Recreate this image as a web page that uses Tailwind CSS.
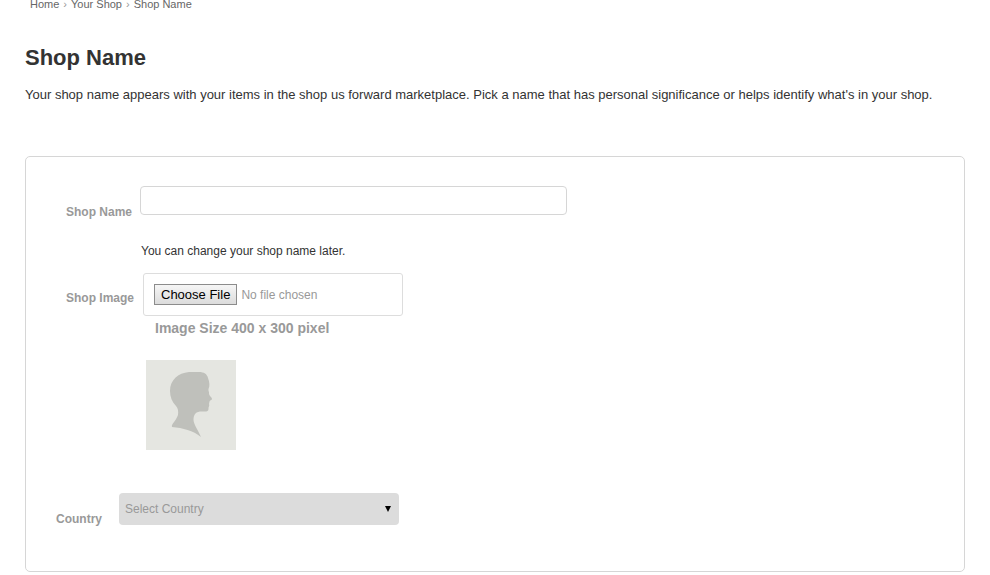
<!DOCTYPE html>
<html lang="en">
<head>
    <meta charset="UTF-8">
    <meta name="viewport" content="width=device-width, initial-scale=1.0">
    <title>Shop Name</title>
    <script src="https://cdn.jsdelivr.net/npm/@tailwindcss/browser@4"></script>
</head>
<body class="bg-white font-['Liberation_Sans',Arial,sans-serif] text-[13px] text-[#333]">
<div class="px-[25px]">
    <!-- Breadcrumbs -->
    <nav aria-label="Breadcrumb" class="flex gap-1 pl-[5px] text-[11px] leading-2 text-[#666]">
        <a href="#">Home</a>
        <span class="text-[#999]">›</span>
        <a href="#">Your Shop</a>
        <span class="text-[#999]">›</span>
        <a href="#">Shop Name</a>
    </nav>

    <!-- Heading -->
    <header>
        <h1 class="mt-9 text-[22px] leading-7 font-bold">Shop Name</h1>
        <p class="mt-[13px] leading-5">Your shop name appears with your items in the shop us forward marketplace. Pick a name that has personal significance or helps identify what's in your shop.</p>
    </header>

    <!-- Shop form -->
    <form class="mt-[51px] rounded-[5px] border border-[#d6d6d6] pt-[29px] pb-11">
        <div class="flex items-start pl-10">
            <label for="shopName" class="mt-[18px] w-[74px] text-xs leading-4 font-bold text-[#999]">Shop Name</label>
            <div class="flex-1">
                <input type="text" id="shopName" class="block h-[29px] w-full max-w-[427px] rounded-[4px] border border-[#d6d6d6] px-2">
                <p class="mt-[26px] pl-px text-xs leading-5">You can change your shop name later.</p>
            </div>
        </div>

        <div class="mt-3 flex items-start pl-10">
            <label for="shopImage" class="mt-[17px] w-[77px] text-xs leading-4 font-bold text-[#999]">Shop Image</label>
            <div>
                <input type="file" id="shopImage" class="block w-[260px] rounded-[3px] border border-[#ddd] p-[10px] text-xs text-[#999] file:mr-1 file:h-[21px] file:rounded-none file:border file:border-solid file:border-[#8c8c8c] file:bg-linear-to-b file:from-[#f6f6f6] file:to-[#dcdcdc] file:px-[6px] file:text-[13px] file:leading-4 file:text-black">
                <p class="mt-1 pl-3 text-[14px] leading-4 font-bold text-[#999]">Image Size 400 x 300 pixel</p>
                <svg class="mt-6 ml-[3px] size-[90px] bg-[#e5e6e1]" viewBox="0 0 90 90" role="img" aria-label="Shop image">
                    <path fill="#bfc0bb" d="M43 12H53C58 12 61 14 62 18C63.500 22 64 26 62.500 29C62 31 63.500 32 63 34C63.500 36 66 37.500 66 39C66 40.500 63.500 40 63.500 41.500L63 44C64 46 62 47 62.500 49C62.500 52 60 51.500 56 51.500C50 51.500 47.500 54 47.500 60C48 65 52 70 55 77C47 70.500 37 68 26 67C25 64 30 61 32 55C32.500 51 32 48 30 46C26 42 24 37 24 31C24 20 32 13 43 12Z"/>
                </svg>
            </div>
        </div>

        <div class="mt-[43px] flex items-start pl-[30px]">
            <label for="country" class="mt-[18px] w-[63px] text-xs leading-4 font-bold text-[#999]">Country</label>
            <div class="relative">
                <select id="country" class="block h-8 w-[280px] appearance-none rounded-[4px] bg-[#dcdcdc] px-[6px] text-xs text-[#999]">
                    <option>Select Country</option>
                </select>
                <svg class="pointer-events-none absolute top-[13px] right-2 h-[6px] w-[6px]" viewBox="0 0 6 6" aria-hidden="true"><path d="M0 0H6L3 6Z"/></svg>
            </div>
        </div>
    </form>
</div>
</body>
</html>
